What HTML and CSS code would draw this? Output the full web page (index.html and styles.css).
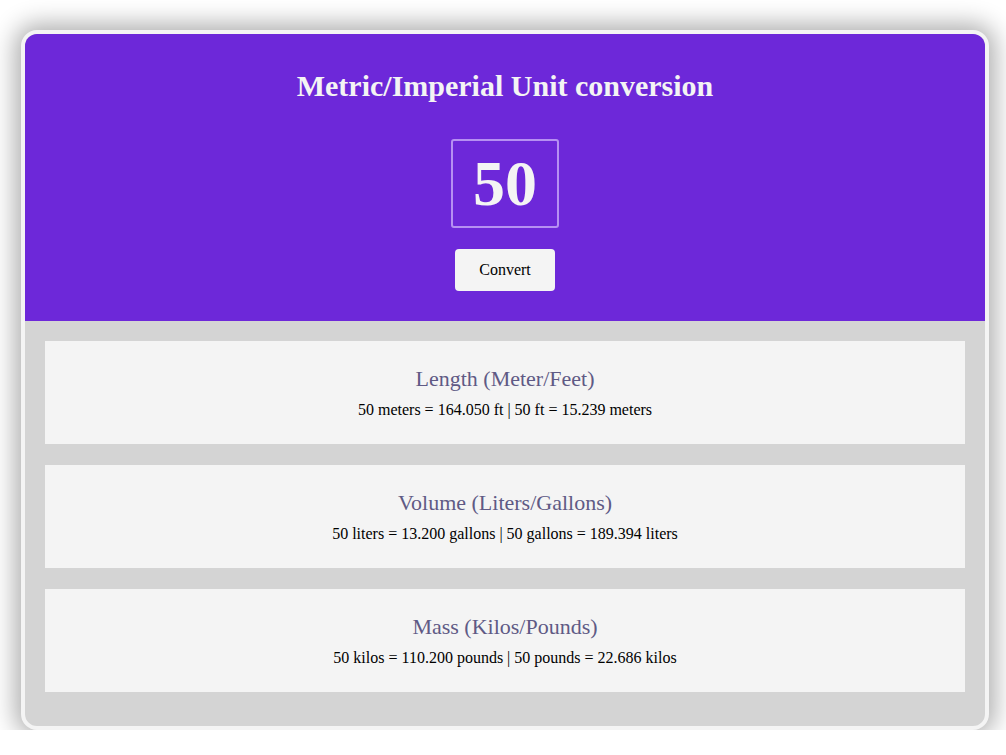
FILE: index.html
```html
<!DOCTYPE html>
<html>
<head>
<meta charset="utf-8">
<link rel="stylesheet" href="styles.css">
</head>
<body>
<div class="container">
  <header class="header">
    <h1 class="title">Metric/Imperial Unit conversion</h1>
    <input class="num" type="text" value="50">
    <button class="btn">Convert</button>
  </header>
  <section class="results">
    <div class="card">
      <h2 class="card-title">Length (Meter/Feet)</h2>
      <p class="card-text">50 meters = 164.050 ft | 50 ft = 15.239 meters</p>
    </div>
    <div class="card">
      <h2 class="card-title">Volume (Liters/Gallons)</h2>
      <p class="card-text">50 liters = 13.200 gallons | 50 gallons = 189.394 liters</p>
    </div>
    <div class="card">
      <h2 class="card-title">Mass (Kilos/Pounds)</h2>
      <p class="card-text">50 kilos = 110.200 pounds | 50 pounds = 22.686 kilos</p>
    </div>
  </section>
</div>
</body>
</html>
```
FILE: styles.css
```css
html, body {
  margin: 0;
  padding: 0;
  background: #ffffff;
}
body {
  font-family: "Liberation Serif", "Times New Roman", serif;
  padding-top: 30px;
}
.container {
  width: 960px;
  height: 692px;
  margin-left: 21px;
  border: 4px solid #f4f4f4;
  border-radius: 16px;
  overflow: hidden;
  background: #d4d4d4;
  box-shadow: 0 0 24px 6px rgba(0, 0, 0, 0.32);
  display: flex;
  flex-direction: column;
}
.header {
  background: #6d28d9;
  display: flex;
  flex-direction: column;
  align-items: center;
  padding: 34px 0 30px;
}
.title {
  margin: 0;
  font-size: 30px;
  line-height: 36px;
  font-weight: bold;
  color: #f4f4f4;
}
.num {
  margin-top: 35px;
  box-sizing: border-box;
  width: 108px;
  height: 89px;
  border: 2px solid #b690f2;
  border-radius: 3px;
  background: transparent;
  color: #f4f4f4;
  font-family: "Liberation Serif", "Times New Roman", serif;
  font-size: 64px;
  font-weight: bold;
  text-align: center;
  padding: 0;
  outline: none;
}
.btn {
  margin-top: 21px;
  width: 100px;
  height: 42px;
  border: none;
  border-radius: 4px;
  background: #f4f4f4;
  color: #000;
  font-family: "Liberation Serif", "Times New Roman", serif;
  font-size: 16px;
  padding: 0;
}
.results {
  display: flex;
  flex-direction: column;
  gap: 21px;
  padding: 20px 20px;
}
.card {
  background: #f4f4f4;
  height: 103px;
  box-sizing: border-box;
  padding-top: 24px;
  display: flex;
  flex-direction: column;
  align-items: center;
}
.card-title {
  margin: 0;
  font-size: 22px;
  line-height: 28px;
  font-weight: normal;
  color: #5f5a85;
}
.card-text {
  margin: 7px 0 0;
  font-size: 16px;
  line-height: 20px;
  color: #000;
}
```
